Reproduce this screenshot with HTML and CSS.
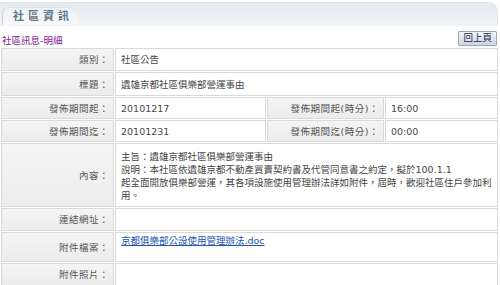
FILE: index.html
```html
<!DOCTYPE html>
<html lang="zh-Hant">
<head>
  <meta charset="UTF-8">
  <title>社區資訊</title>
  <link rel="stylesheet" href="styles.css">
</head>
<body>
  <div class="header">
    <div class="tab">社區資訊</div>
  </div>

  <div class="toolbar">
    <span class="crumb">社區訊息-明細</span>
    <button class="back-button">回上頁</button>
  </div>

  <table class="detail">
    <colgroup>
      <col class="col-label">
      <col class="col-data">
      <col class="col-label2">
      <col>
    </colgroup>
    <tr class="row">
      <th>類別：</th>
      <td colspan="3">社區公告</td>
    </tr>
    <tr class="row row-title">
      <th>標題：</th>
      <td colspan="3">遺雄京都社區俱樂部營運事由</td>
    </tr>
    <tr class="row row-short">
      <th>發佈期間起：</th>
      <td>20101217</td>
      <th>發佈期間起(時分)：</th>
      <td>16:00</td>
    </tr>
    <tr class="row row-short">
      <th>發佈期間迄：</th>
      <td>20101231</td>
      <th>發佈期間迄(時分)：</th>
      <td>00:00</td>
    </tr>
    <tr class="row">
      <th>內容：</th>
      <td colspan="3" class="content">主旨：遺雄京都社區俱樂部營運事由<br>說明：本社區依遺雄京都不動產買賣契約書及代管同意書之約定，擬於100.1.1<br>起全面開放俱樂部營運，其各項設施使用管理辦法詳如附件，屆時，歡迎社區住戶參加利<br>用。</td>
    </tr>
    <tr class="row">
      <th>連結網址：</th>
      <td colspan="3"></td>
    </tr>
    <tr class="row">
      <th>附件檔案：</th>
      <td colspan="3" class="attach"><a href="#">京都俱樂部公設使用管理辦法.doc</a></td>
    </tr>
    <tr class="row">
      <th>附件照片：</th>
      <td colspan="3"></td>
    </tr>
  </table>
</body>
</html>
```

FILE: styles.css
```css
body {
  margin: 0;
  font-family: "DejaVu Sans", "Noto Sans CJK TC", sans-serif;
  font-size: 9.5px;
  color: #474747;
  background-color: #ffffff;
}

.header {
  height: 22px;
  margin-top: 2px;
  margin-right: 2px;
  border-top: 1px solid #dbe1e8;
  border-right: 1px solid #dbe1e8;
  border-bottom: 1px solid #eef1f5;
  border-radius: 0 10px 0 0;
  background: linear-gradient(#e4e9ef, #f3f5f8);
  display: flex;
  align-items: flex-end;
}

.tab {
  height: 17px;
  margin-left: 2px;
  padding: 0 4px 0 10px;
  border-left: 1px solid #c7d0da;
  border-top: 1px solid #dde3ea;
  border-radius: 7px 9px 0 0;
  background: linear-gradient(#edf1f5, #f7f8fa);
  font-size: 11px;
  font-weight: bold;
  letter-spacing: 4px;
  line-height: 17px;
  color: #62788b;
}

.toolbar {
  height: 21px;
  display: flex;
  align-items: center;
  justify-content: space-between;
  padding: 0 3px 0 2px;
}

.crumb {
  color: #80208f;
  margin-top: 6px;
}

.back-button {
  font-family: inherit;
  font-size: 9.5px;
  color: #1d2b45;
  height: 15px;
  padding: 0 4px;
  margin-top: 3px;
  border: 1px solid #9ba7b7;
  border-radius: 1px;
  background: linear-gradient(#f2f5fa, #cbd5e3);
  line-height: 12px;
}

.detail {
  width: 499px;
  border-collapse: separate;
  border-spacing: 1px;
  table-layout: fixed;
}

.col-label {
  width: 113px;
}

.col-data {
  width: 151px;
}

.col-label2 {
  width: 117px;
}

.detail th,
.detail td {
  border: 1px solid #d9d9d9;
  padding: 4px 5px;
  line-height: 13px;
  height: 13px;
}

.detail th {
  font-weight: normal;
  text-align: right;
  padding-right: 4px;
  color: #555555;
  background: linear-gradient(#f4f4f4, #ececec);
  letter-spacing: 0.5px;
}

.detail td {
  background-color: #ffffff;
  color: #474747;
}

.row-title td,
.row-title th {
  padding-top: 5px;
}

.row-short td,
.row-short th {
  padding-top: 4px;
  padding-bottom: 3px;
}

.detail td.content {
  padding-top: 6px;
  padding-bottom: 4px;
}

.detail td.attach {
  vertical-align: top;
  padding-top: 1px;
  padding-bottom: 14px;
}

.attach a {
  color: #2454b0;
  text-decoration: underline;
}
```
